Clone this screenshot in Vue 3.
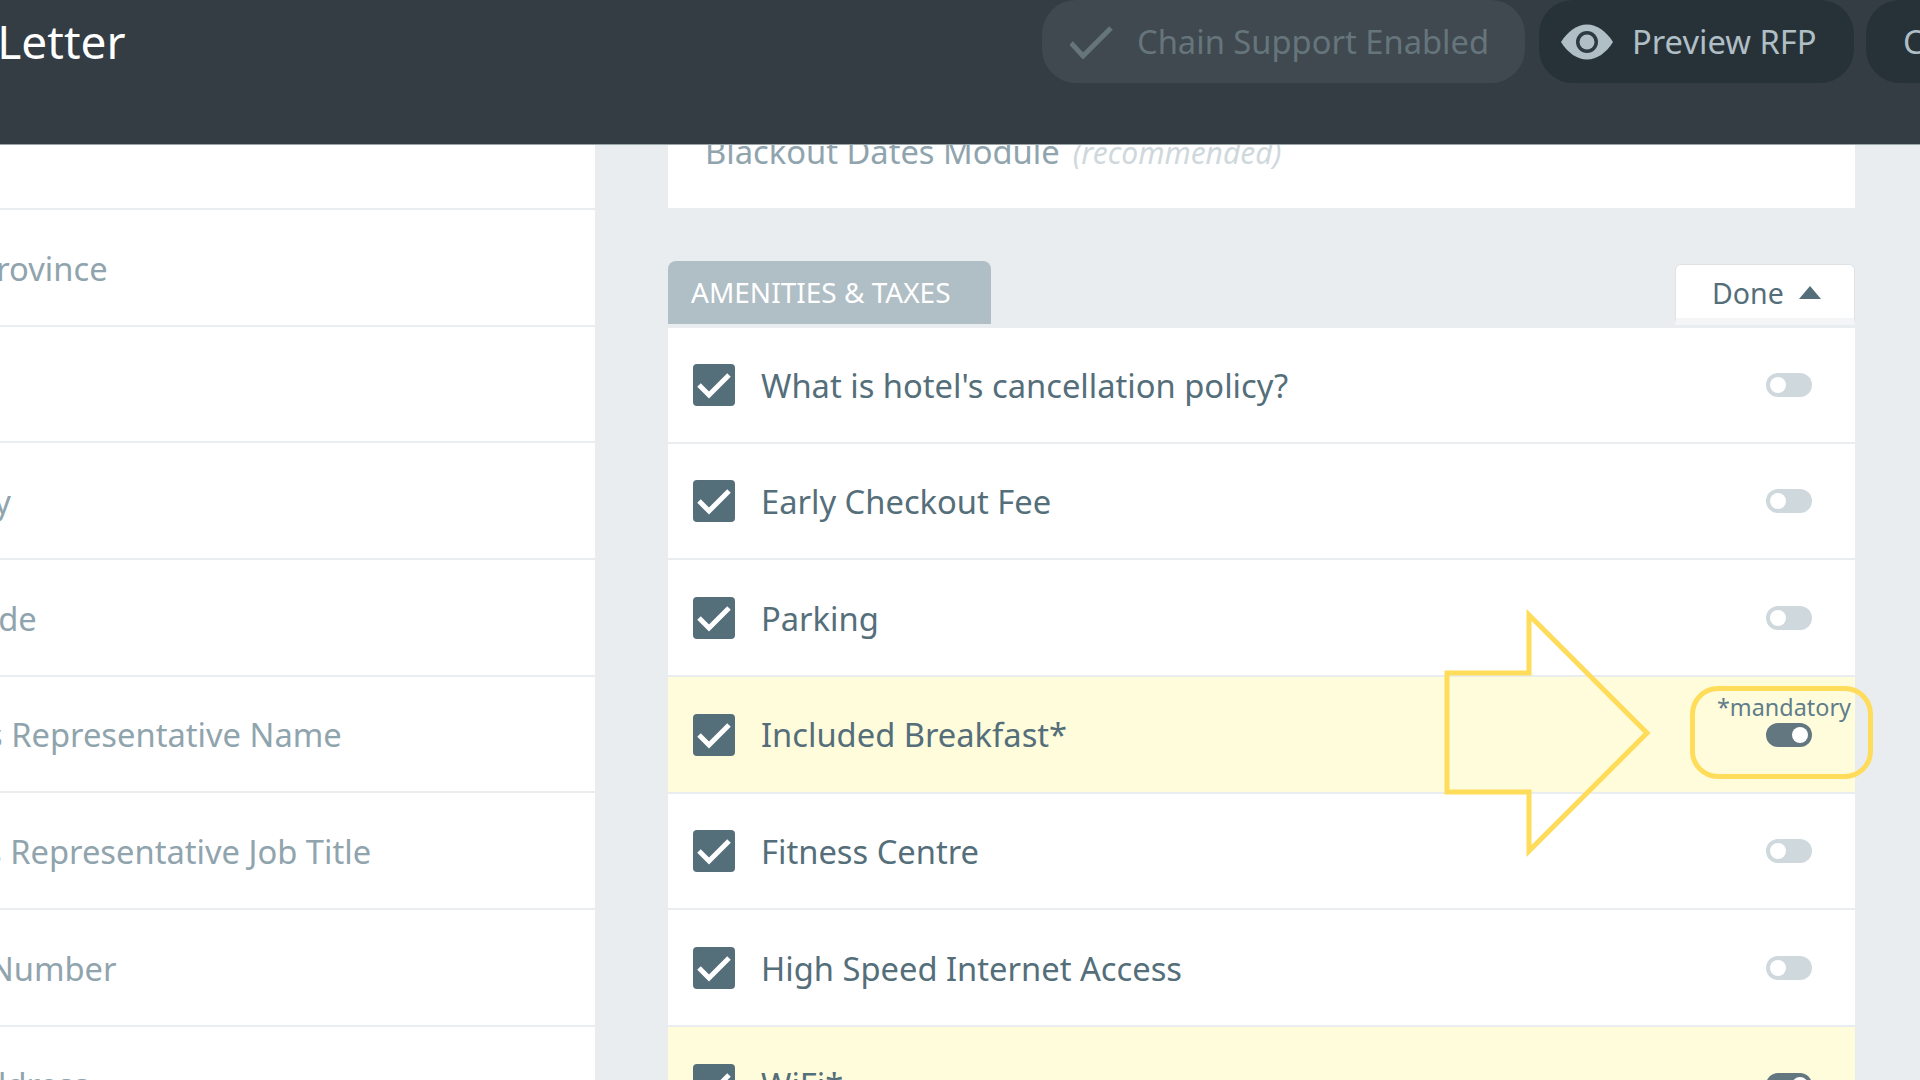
<script setup>
const labels = [
  { text: '', first: true, shift: 0 },
  { text: 'State/Province', shift: -11 },
  { text: 'City', shift: 0 },
  { text: 'Country', shift: -9 },
  { text: 'Zip Code', shift: 5 },
  { text: "Hotel's Representative Name", shift: 1 },
  { text: "Hotel's Representative Job Title", shift: 0 },
  { text: 'Phone Number', shift: -15 },
  { text: 'Email Address', shift: -24 }
]
const amenities = [
  { text: "What is hotel's cancellation policy?", first: true },
  { text: 'Early Checkout Fee' },
  { text: 'Parking' },
  { text: 'Included Breakfast*', on: true, note: true },
  { text: 'Fitness Centre' },
  { text: 'High Speed Internet Access' },
  { text: 'WiFi*', on: true }
]
</script>

<template>
  <div class="page">
    <header class="topbar">
      <h1 class="title">Cover Letter</h1>
      <div class="actions">
        <div class="pill pill-muted">
          <svg class="check-icon" width="44" height="34" viewBox="0 0 44 34"><path d="M1 18 L13 31 L41 3" fill="none" stroke="#66757c" stroke-width="5"/></svg>
          <span>Chain Support Enabled</span>
        </div>
        <div class="pill pill-dark">
          <svg class="eye-icon" width="54" height="36" viewBox="0 0 54 36">
            <path d="M1 18 C8 7 17 0.5 27 0.5 S46 7 53 18 C46 29 37 35.5 27 35.5 S8 29 1 18Z" fill="#b0bec5"/>
            <circle cx="27" cy="18" r="11" fill="#2d3a41"/>
            <circle cx="27" cy="18" r="7.5" fill="#b0bec5"/>
          </svg>
          <span>Preview RFP</span>
        </div>
        <div class="pill pill-dark pill-cut"><span>Continue</span></div>
      </div>
    </header>

    <main class="content">
      <section class="left-col">
        <div v-for="l in labels" :key="l.text" class="left-row" :class="{ 'left-first': l.first }">
          <span class="left-label" :style="{ marginLeft: (l.shift - 103) + 'px' }">{{ l.text }}</span>
        </div>
      </section>

      <section class="right-col">
        <div class="module-card">
          <span class="module-name">Blackout Dates Module</span>
          <em class="module-note">(recommended)</em>
        </div>
        <div class="section-head">
          <div class="tab">AMENITIES &amp; TAXES</div>
          <div class="done">
            <span>Done</span>
            <span class="caret"></span>
          </div>
        </div>
        <div
          v-for="a in amenities"
          :key="a.text"
          class="row"
          :class="{ 'row-first': a.first, 'row-on': a.on }"
        >
          <span class="checkbox">
            <svg width="42" height="42" viewBox="0 0 42 42"><path d="M6 21 L16 31 L36 11" fill="none" stroke="#fff" stroke-width="5"/></svg>
          </span>
          <span class="row-text">{{ a.text }}</span>
          <span v-if="a.note" class="mandatory">*mandatory</span>
          <span class="toggle" :class="{ 'toggle-on': a.on }"><i class="knob"></i></span>
        </div>
      </section>
    </main>

    <svg class="arrow" width="212" height="248" viewBox="0 0 212 248">
      <path d="M4 64 H86 V6 L204 124 L86 242 V183 H4 Z" fill="none" stroke="#ffdc5a" stroke-width="5"/>
    </svg>
    <div class="callout"></div>
  </div>
</template>

<style>
html, body { margin: 0; background: #e9edf0; overflow: hidden; }
</style>

<style scoped>
.page {
  position: relative;
  width: 1920px;
  height: 1080px;
  overflow: hidden;
  background: #e9edf0;
  font-family: "Noto Sans", "Open Sans", sans-serif;
}
.topbar {
  position: relative;
  z-index: 2;
  height: 145px;
  box-sizing: border-box;
  border-bottom: 1px solid #9aa5aa;
  background: #333d43;
  display: flex;
  justify-content: space-between;
  align-items: flex-start;
  overflow: hidden;
}
.title {
  margin: 9px 0 0 -139px;
  font-size: 46px;
  line-height: 64px;
  font-weight: 400;
  color: #fff;
  white-space: nowrap;
}
.actions {
  display: flex;
  gap: 12px;
  margin-right: -160px;
}
.pill {
  height: 83px;
  box-sizing: border-box;
  border-radius: 34px;
  display: flex;
  align-items: center;
  font-size: 32.7px;
  white-space: nowrap;
}
.pill-muted {
  width: 483px;
  padding-left: 28px;
  gap: 23px;
  background: #3f494f;
  color: #66757c;
  margin-right: 2px;
}
.pill-dark {
  width: 315px;
  padding-left: 21px;
  gap: 18px;
  background: #273238;
  color: #b0bec5;
}
.pill-cut {
  width: 214px;
  padding-left: 37px;
}
.check-icon { flex: none; }
.eye-icon { flex: none; }

.content {
  display: flex;
  align-items: flex-start;
}
.left-col {
  width: 595px;
  margin-right: 73px;
  flex: none;
  overflow: hidden;
}
.left-row {
  height: 116.67px;
  box-sizing: border-box;
  padding-top: 2px;
  background: #fff;
  border-bottom: 2px solid #e9edf0;
  display: flex;
  align-items: center;
  font-size: 32.7px;
  color: #90a4ae;
  white-space: nowrap;
}
.left-first { height: 65px; }

.right-col {
  width: 1187px;
  flex: none;
}
.module-card {
  height: 63px;
  background: #fff;
  padding-left: 37px;
  line-height: 14px;
  white-space: nowrap;
}
.module-name {
  font-size: 32.7px;
  color: #90a4ae;
}
.module-note {
  margin-left: 13px;
  font-size: 30px;
  font-style: italic;
  color: #cfd8dc;
}
.section-head {
  margin-top: 53px;
  height: 67px;
  display: flex;
  justify-content: space-between;
  align-items: flex-start;
}
.tab {
  width: 323px;
  height: 63px;
  box-sizing: border-box;
  padding-left: 23px;
  border-radius: 8px 8px 0 0;
  background: #b0bec5;
  color: #fff;
  font-size: 28px;
  line-height: 62px;
  white-space: nowrap;
}
.done {
  width: 180px;
  height: 61px;
  margin-top: 3px;
  box-sizing: border-box;
  padding: 3px 0 0 36px;
  border: 1px solid #dfe3e6;
  border-bottom: 7px solid #f3f5f6;
  border-radius: 6px 6px 0 0;
  background: #fff;
  color: #546e7a;
  font-size: 28.5px;
  display: flex;
  align-items: center;
  gap: 15px;
}
.caret {
  width: 0;
  height: 0;
  border-left: 11px solid transparent;
  border-right: 11px solid transparent;
  border-bottom: 13px solid #546e7a;
  margin-top: -2px;
}
.row {
  position: relative;
  height: 116.67px;
  box-sizing: border-box;
  border-bottom: 2px solid #e9edf0;
  background: #fff;
  display: flex;
  align-items: center;
  padding: 1px 43px 0 25px;
  color: #546e7a;
  font-size: 32.7px;
  white-space: nowrap;
}
.row-first { height: 115.67px; }
.row-on { background: #fffcdc; }
.checkbox {
  width: 42px;
  height: 42px;
  flex: none;
  border-radius: 4px;
  background: #546e7a;
  margin-right: 26px;
}
.checkbox svg { display: block; }
.row-text { flex: 1; }
.mandatory {
  position: absolute;
  right: 4px;
  top: 14px;
  font-size: 23.4px;
  line-height: 32px;
  color: #607d8b;
}
.toggle {
  width: 46px;
  height: 24px;
  flex: none;
  box-sizing: border-box;
  padding: 4px;
  border-radius: 12px;
  background: #cfd8dc;
  display: flex;
  justify-content: flex-start;
}
.toggle-on {
  background: #62777f;
  justify-content: flex-end;
}
.knob {
  width: 16px;
  height: 16px;
  border-radius: 50%;
  background: #fff;
}
.arrow {
  position: absolute;
  left: 1443px;
  top: 609px;
  z-index: 3;
}
.callout {
  position: absolute;
  z-index: 3;
  left: 1690px;
  top: 686px;
  width: 183px;
  height: 93px;
  box-sizing: border-box;
  border: 5px solid #ffdc5a;
  border-radius: 28px;
}
</style>
